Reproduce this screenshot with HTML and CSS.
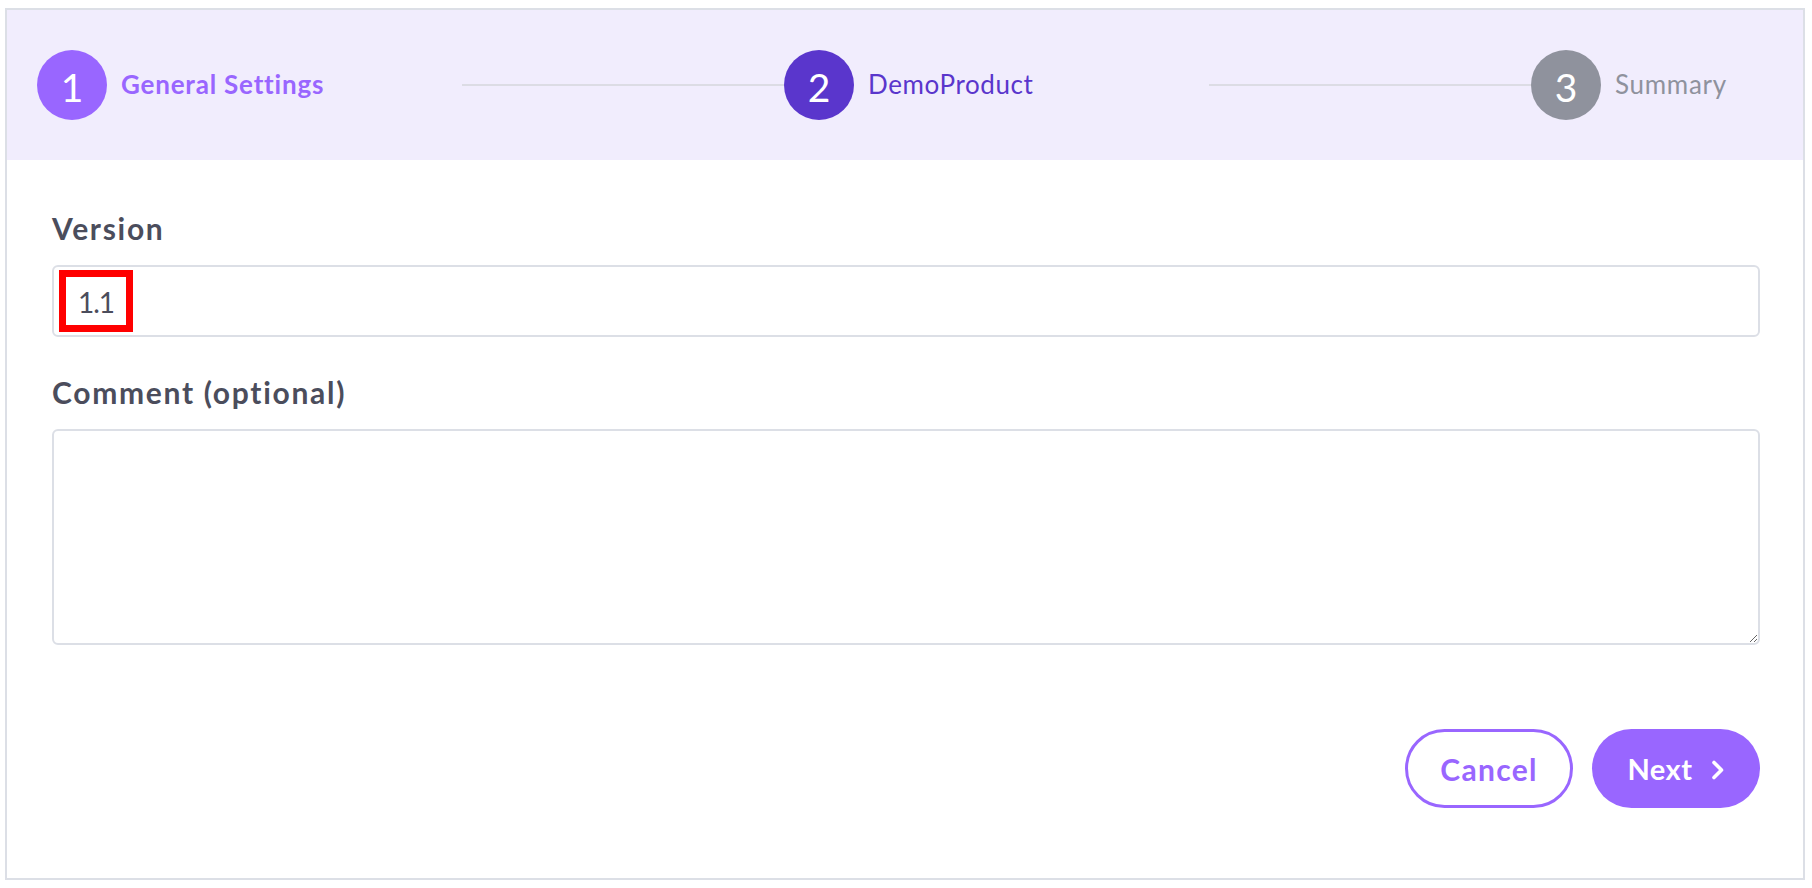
FILE: index.html
```html
<!DOCTYPE html>
<html lang="en">
<head>
<meta charset="utf-8">
<title>Wizard</title>
<link rel="stylesheet" href="styles.css">
</head>
<body>
<div class="card">
  <div class="steps">
    <div class="step">
      <div class="step-head">
        <span class="circle c-done">1</span>
        <span class="step-label l-done">General Settings</span>
      </div>
      <div class="step-line"></div>
    </div>
    <div class="step">
      <div class="step-head">
        <span class="circle c-active">2</span>
        <span class="step-label l-active">DemoProduct</span>
      </div>
      <div class="step-line"></div>
    </div>
    <div class="step step-last">
      <div class="step-head">
        <span class="circle c-todo">3</span>
        <span class="step-label l-todo">Summary</span>
      </div>
    </div>
  </div>
  <div class="form">
    <div class="label">Version</div>
    <div class="field">
      <span class="value-mark">1.1</span>
    </div>
    <div class="label label-gap">Comment (optional)</div>
    <textarea class="textarea"></textarea>
    <div class="actions">
      <button class="btn btn-outline">Cancel</button>
      <button class="btn btn-primary"><span>Next</span>
        <svg class="chev" width="14" height="20" viewBox="0 0 14 20"><path d="M3 2.5 L10.5 10 L3 17.5" fill="none" stroke="#fff" stroke-width="3.6" stroke-linecap="round" stroke-linejoin="round"/></svg>
      </button>
    </div>
  </div>
</div>
</body>
</html>
```
FILE: styles.css
```css
html, body {
  margin: 0;
  padding: 0;
  background: #ffffff;
}
body {
  font-family: Lato, "Noto Sans", sans-serif;
}
.card {
  margin: 8px 7px 0 5px;
  border: 2px solid #dcdfe6;
  background: #ffffff;
}
.steps {
  height: 150px;
  background: #f1edfd;
  display: flex;
  align-items: center;
  padding: 0 0 0 30px;
}
.step {
  flex: 1 1 0;
  display: flex;
  align-items: center;
}
.step-last {
  flex: 0 0 272px;
}
.step-head {
  flex: 0 0 425px;
  display: flex;
  align-items: center;
}
.step-last .step-head {
  flex: 1 1 auto;
}
.circle {
  width: 70px;
  height: 70px;
  border-radius: 50%;
  box-sizing: border-box;
  padding-top: 5px;
  display: flex;
  align-items: center;
  justify-content: center;
  color: #ffffff;
  font-size: 39px;
  line-height: 1;
  font-weight: 400;
  flex: none;
}
.c-done { background: #9966ff; }
.c-active { background: #5a36cc; }
.c-todo { background: #8f929d; }
.step-label {
  margin-left: 14px;
  font-size: 26px;
  line-height: 1.2;
  white-space: nowrap;
}
.l-done { color: #9966ff; font-weight: 700; letter-spacing: 0.8px; }
.l-active { color: #5a36cc; font-weight: 400; letter-spacing: 0.6px; }
.l-todo { color: #8f929d; font-weight: 400; letter-spacing: 0.7px; }
.step-line {
  flex: 1 1 auto;
  height: 2px;
  background: #dcdce4;
}
.form {
  padding: 51px 43px 70px 45px;
}
.label {
  font-size: 30px;
  line-height: 35px;
  font-weight: 700;
  color: #4b4d5c;
  letter-spacing: 1.7px;
}
.label-gap {
  margin-top: 38px;
}
.field {
  margin-top: 19px;
  height: 72px;
  box-sizing: border-box;
  border: 2px solid #dcdfe6;
  border-radius: 6px;
  display: flex;
  align-items: center;
  padding-left: 5px;
}
.value-mark {
  box-sizing: border-box;
  width: 74px;
  height: 62px;
  border: 7px solid #ff0000;
  display: flex;
  align-items: center;
  justify-content: center;
  font-size: 28px;
  letter-spacing: -1px;
  color: #4b4d5c;
  padding-top: 2px;
}
.textarea {
  display: block;
  margin-top: 19px;
  width: 100%;
  height: 216px;
  box-sizing: border-box;
  border: 2px solid #dcdfe6;
  border-radius: 6px;
  resize: vertical;
  font-family: Lato, sans-serif;
  font-size: 20px;
  outline: none;
}
.actions {
  margin-top: 84px;
  display: flex;
  justify-content: flex-end;
  gap: 19px;
}
.btn {
  width: 168px;
  height: 79px;
  box-sizing: border-box;
  border-radius: 40px;
  font-family: Lato, sans-serif;
  font-size: 29px;
  font-weight: 700;
  letter-spacing: 0.5px;
  display: flex;
  align-items: center;
  justify-content: center;
  cursor: pointer;
  padding: 0;
}
.btn-outline {
  background: #ffffff;
  border: 3px solid #9966ff;
  color: #9966ff;
  font-size: 30px;
  letter-spacing: 1.3px;
}
.btn-primary {
  background: #9966ff;
  border: none;
  color: #ffffff;
  gap: 18px;
}
.chev {
  display: block;
  margin-top: 3px;
}
```
